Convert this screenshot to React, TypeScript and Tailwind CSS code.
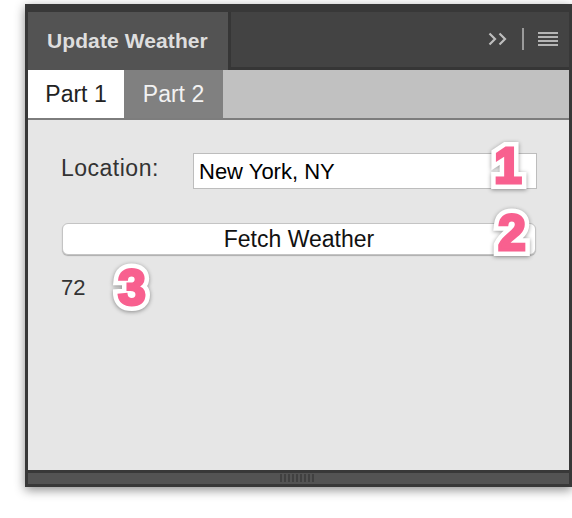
import React from "react";

function Badge({ n, className }: { n: string; className: string }) {
  return (
    <span
      className={`absolute font-bold text-[50px] leading-none ${className}`}
      style={{ fontFamily: '"Liberation Sans", Arial, sans-serif' }}
    >
      <span className="text-white [-webkit-text-stroke:12px_white] [filter:drop-shadow(0_1px_2px_rgba(0,0,0,0.4))]">{n}</span>
      <span className="absolute left-0 top-0 text-[#f8608f] [-webkit-text-stroke:3px_#f8608f]">{n}</span>
    </span>
  );
}

export default function App() {
  return (
    <div className="w-[572px] h-[518px] bg-white overflow-hidden font-['Liberation_Sans',Arial,sans-serif]">
      <div className="ml-[25px] mt-[4px] w-[547px] h-[483px] bg-[#383838] pt-[8px] pl-[3px] pr-[3px] pb-[3px] flex flex-col shadow-[0_3px_10px_rgba(0,0,0,0.45)]">
        {/* header */}
        <div className="h-[58px] flex shrink-0">
          <div className="w-[200px] bg-[#535353] flex items-center pl-[19px]">
            <span className="text-[21px] font-bold text-[#dedede] tracking-[0.1px]">Update Weather</span>
          </div>
          <div className="flex-1 bg-[#434343] border-l-[3px] border-b-[3px] border-[#363636] flex items-center justify-end pr-[11px] pb-[1px]">
            <svg width="19" height="14" viewBox="0 0 19 14" className="mr-[15px]">
              <path d="M1.5 1.5 L7 7 L1.5 12.5" stroke="#bdbdbd" strokeWidth="2.2" fill="none" />
              <path d="M11.5 1.5 L17 7 L11.5 12.5" stroke="#bdbdbd" strokeWidth="2.2" fill="none" />
            </svg>
            <div className="w-[2px] h-[22px] bg-[#9a9a9a] mr-[14px]" />
            <div className="w-[20px] flex flex-col gap-[2px]">
              <div className="h-[2px] bg-[#b5b5b5]" />
              <div className="h-[2px] bg-[#b5b5b5]" />
              <div className="h-[2px] bg-[#b5b5b5]" />
              <div className="h-[2px] bg-[#b5b5b5]" />
            </div>
          </div>
        </div>
        {/* tabs */}
        <div className="h-[50px] flex bg-[#c1c1c1] border-b-[2px] border-[#7d7d7d] shrink-0">
          <div className="w-[96px] bg-white flex items-center justify-center text-[23px] text-[#222]">Part 1</div>
          <div className="w-[99px] bg-[#808080] flex items-center justify-center text-[23px] text-[#f2f2f2]">Part 2</div>
        </div>
        {/* content */}
        <div className="flex-1 bg-[#e6e6e6] relative pl-[33px] pr-[32px] pt-[33px]">
          <div className="flex items-center">
            <span className="w-[132px] text-[23px] text-[#333] tracking-[0.5px] -mt-[5px]">Location:</span>
            <div className="flex-1 h-[36px] bg-white border border-[#bdbdbd] flex items-center pl-[5px] text-[22px] text-black">
              New York, NY
            </div>
          </div>
          <div className="mt-[34px] ml-[1px] mr-[1px] h-[32px] bg-white rounded-[6px] border border-[#c4c4c4] shadow-[0_1px_1px_rgba(0,0,0,0.25)] flex items-center justify-center text-[23px] text-[#111]">
            Fetch Weather
          </div>
          <div className="mt-[22px] text-[22px] text-[#333] leading-none">72</div>
          <Badge n="1" className="left-[466px] top-[21px]" />
          <Badge n="2" className="left-[470px] top-[88px]" />
          <Badge n="3" className="left-[90px] top-[143px]" />
        </div>
        {/* bottom bar */}
        <div className="h-[14px] shrink-0 pt-[3px]">
          <div className="h-[11px] bg-[#535353] flex justify-center items-start">
            <div className="flex gap-[2px] mt-[1px] ml-[-3px]">
              {Array.from({ length: 9 }).map((_, i) => (
                <div key={i} className="w-[2px] h-[8px] bg-[#404040]" />
              ))}
            </div>
          </div>
        </div>
      </div>
    </div>
  );
}
